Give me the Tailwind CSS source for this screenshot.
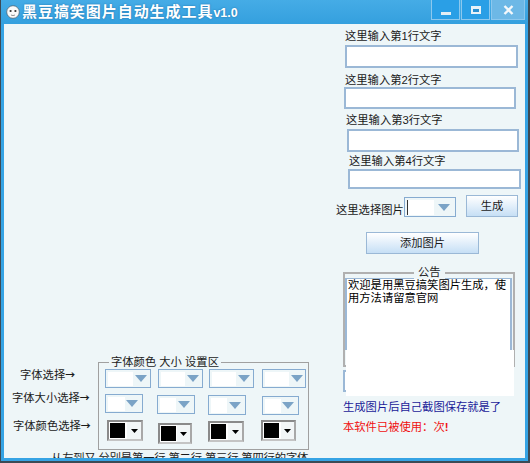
<!doctype html>
<html lang="zh"><head><meta charset="utf-8">
<script src="https://cdn.jsdelivr.net/npm/@tailwindcss/browser@4"></script>
</head>
<body class="m-0 h-[463px] w-[530px] overflow-hidden border-b-2 border-l border-r-2 border-[#3c4a55] bg-[#35a3e4] font-['Liberation_Sans','Noto_Sans_CJK_SC',sans-serif] text-[11.3px] leading-[14px] text-[#1a1a1a]">
<div class="relative flex h-[24px] w-full bg-gradient-to-b from-[#45ace6] to-[#34a0de]">
  <svg class="ml-[5px] mt-[5px] h-[14px] w-[14px]" viewBox="0 0 14 14"><circle cx="7" cy="7" r="6.3" fill="#fafafa" stroke="#4a5a66" stroke-width="0.7"/><circle cx="4.6" cy="6" r="1.1" fill="#333"/><circle cx="9.4" cy="6" r="1.1" fill="#333"/><path d="M5 10 Q7 11.2 9 10" fill="none" stroke="#777" stroke-width="0.8"/></svg>
  <div class="ml-[2px] mt-[3px] h-[18px] whitespace-nowrap text-[15px] font-bold leading-[18px] tracking-[0.95px] text-white [text-shadow:0_0_2px_#1c6fa8]">黑豆搞笑图片自动生成工具<span class="text-[12.5px] tracking-normal">v1.0</span></div>
  <div class="ml-auto mr-[3px] flex h-[20px] gap-[1px]">
    <div class="flex w-[29px] items-end justify-center border-x border-b border-[#8cc8ee] bg-[#2a9fe6] pb-[4px]"><div class="h-[3px] w-[10px] bg-[#e4eef4]"></div></div>
    <div class="flex w-[29px] items-center justify-center border-x border-b border-[#8cc8ee] bg-[#2a9fe6]"><div class="h-[8px] w-[10px] border-2 border-t-[3px] border-[#e8f2f8] bg-[#2a8fd0]"></div></div>
    <div class="flex w-[34px] items-center justify-center border-x border-b border-[#8cc8ee] bg-[#6db8e6]"><svg class="h-[10px] w-[11px]" viewBox="0 0 11 10"><path d="M1.5 1 L9.5 9 M9.5 1 L1.5 9" stroke="#f4f8fb" stroke-width="2.4"/></svg></div>
  </div>
</div>
<div class="ml-[3px] flex h-[434px] w-[521px] overflow-hidden bg-[#eef6f8]">
  <!-- left column -->
  <div class="w-[332px] shrink-0">
    <div class="mt-[338px] flex">
      <div class="w-[94px] shrink-0">
        <div class="ml-[16px] mt-[6px] whitespace-nowrap">字体选择<span class="font-['Noto_Sans_CJK_SC'] text-[10px] font-bold">→</span></div>
        <div class="ml-[8px] mt-[9px] whitespace-nowrap">字体大小选择<span class="font-['Noto_Sans_CJK_SC'] text-[10px] font-bold">→</span></div>
        <div class="ml-[9px] mt-[14px] whitespace-nowrap">字体颜色选择<span class="font-['Noto_Sans_CJK_SC'] text-[10px] font-bold">→</span></div>
      </div>
      <div class="relative h-[88px] w-[211px] shrink-0 border border-[#a0a0a0] pt-[6px]">
        <div class="absolute left-[10px] top-[-8px] whitespace-nowrap bg-[#eef6f8] px-[2px]">字体颜色 大小 设置区</div>
        <div class="flex items-start">
          <div class="ml-[6px] flex h-[19px] w-[46px] items-center border border-[#86abd0] pl-[2px]"><div class="h-[14px] w-[25px] bg-white"></div><svg class="ml-[2px] h-[7px] w-[12px]" viewBox="0 0 12 7"><path d="M0 0H12L6 7Z" fill="#7ba3c6"/></svg></div>
          <div class="ml-[7px] flex h-[19px] w-[45px] items-center border border-[#86abd0] pl-[2px]"><div class="h-[14px] w-[24px] bg-white"></div><svg class="ml-[2px] h-[7px] w-[12px]" viewBox="0 0 12 7"><path d="M0 0H12L6 7Z" fill="#7ba3c6"/></svg></div>
          <div class="ml-[6px] flex h-[19px] w-[45px] items-center border border-[#86abd0] pl-[2px]"><div class="h-[14px] w-[24px] bg-white"></div><svg class="ml-[2px] h-[7px] w-[12px]" viewBox="0 0 12 7"><path d="M0 0H12L6 7Z" fill="#7ba3c6"/></svg></div>
          <div class="ml-[8px] flex h-[19px] w-[44px] items-center border border-[#86abd0] pl-[2px]"><div class="h-[14px] w-[24px] bg-white"></div><svg class="ml-[2px] h-[7px] w-[12px]" viewBox="0 0 12 7"><path d="M0 0H12L6 7Z" fill="#7ba3c6"/></svg></div>
        </div>
        <div class="mt-[6px] flex h-[21px] items-start">
          <div class="ml-[6px] flex h-[19px] w-[38px] items-center border border-[#86abd0] pl-[2px]"><div class="h-[14px] w-[17px] bg-white"></div><svg class="ml-[1px] h-[7px] w-[12px]" viewBox="0 0 12 7"><path d="M0 0H12L6 7Z" fill="#7ba3c6"/></svg></div>
          <div class="ml-[14px] mt-[1px] flex h-[19px] w-[38px] items-center border border-[#86abd0] pl-[2px]"><div class="h-[14px] w-[16px] bg-white"></div><svg class="ml-[2px] h-[7px] w-[12px]" viewBox="0 0 12 7"><path d="M0 0H12L6 7Z" fill="#7ba3c6"/></svg></div>
          <div class="ml-[13px] mt-[1px] flex h-[20px] w-[38px] items-center border border-[#86abd0] pl-[2px]"><div class="h-[15px] w-[16px] bg-white"></div><svg class="ml-[2px] h-[7px] w-[12px]" viewBox="0 0 12 7"><path d="M0 0H12L6 7Z" fill="#7ba3c6"/></svg></div>
          <div class="ml-[16px] mt-[2px] flex h-[19px] w-[37px] items-center border border-[#86abd0] pl-[2px]"><div class="h-[14px] w-[16px] bg-white"></div><svg class="ml-[1px] h-[7px] w-[12px]" viewBox="0 0 12 7"><path d="M0 0H12L6 7Z" fill="#7ba3c6"/></svg></div>
        </div>
        <div class="mt-[5px] flex items-start">
          <div class="ml-[8px] flex h-[21px] w-[36px] items-stretch border-2 border-[#8a8a8a] border-b-[#c4c4c4] border-r-[#a8a8a8] bg-white"><div class="my-[1px] ml-[1px] w-[15px] bg-black"></div><div class="ml-[2px] flex flex-1 items-center justify-center bg-[#f2f6f7]"><svg class="h-[4px] w-[7px]" viewBox="0 0 7 4"><path d="M0 0H7L3.5 4Z" fill="#000"/></svg></div></div>
          <div class="ml-[15px] mt-[3px] flex h-[21px] w-[34px] items-stretch border-2 border-[#8a8a8a] border-b-[#c4c4c4] border-r-[#a8a8a8] bg-white"><div class="my-[1px] ml-[1px] w-[15px] bg-black"></div><div class="ml-[1px] flex flex-1 items-center justify-center bg-[#f2f6f7]"><svg class="h-[4px] w-[7px]" viewBox="0 0 7 4"><path d="M0 0H7L3.5 4Z" fill="#000"/></svg></div></div>
          <div class="ml-[16px] mt-[1px] flex h-[21px] w-[36px] items-stretch border-2 border-[#8a8a8a] border-b-[#c4c4c4] border-r-[#a8a8a8] bg-white"><div class="my-[1px] ml-[1px] w-[15px] bg-black"></div><div class="ml-[2px] flex flex-1 items-center justify-center bg-[#f2f6f7]"><svg class="h-[4px] w-[7px]" viewBox="0 0 7 4"><path d="M0 0H7L3.5 4Z" fill="#000"/></svg></div></div>
          <div class="ml-[17px] flex h-[21px] w-[35px] items-stretch border-2 border-[#8a8a8a] border-b-[#c4c4c4] border-r-[#a8a8a8] bg-white"><div class="my-[1px] ml-[1px] w-[15px] bg-black"></div><div class="ml-[2px] flex flex-1 items-center justify-center bg-[#f2f6f7]"><svg class="h-[4px] w-[7px]" viewBox="0 0 7 4"><path d="M0 0H7L3.5 4Z" fill="#000"/></svg></div></div>
        </div>
      </div>
    </div>
    <div class="ml-[47px] mt-[1px] whitespace-nowrap tracking-[-0.15px]">从左到又 分别是第一行 第二行 第三行 第四行的字体</div>
  </div>
  <!-- right column -->
  <div class="relative flex flex-1 flex-col items-start">
    <div class="ml-[9px] mt-[5px] whitespace-nowrap">这里输入第1行文字</div>
    <div class="ml-[9px] mt-[2px] h-[23px] w-[173px] border-2 border-[#9bb8d6] bg-white"></div>
    <div class="ml-[9px] mt-[5px] whitespace-nowrap">这里输入第2行文字</div>
    <div class="ml-[8px] h-[22px] w-[172px] border-2 border-[#9bb8d6] bg-white"></div>
    <div class="ml-[10px] mt-[4px] whitespace-nowrap">这里输入第3行文字</div>
    <div class="ml-[11px] mt-[2px] h-[23px] w-[172px] border-2 border-[#9bb8d6] bg-white"></div>
    <div class="ml-[13px] mt-[2px] whitespace-nowrap">这里输入第4行文字</div>
    <div class="ml-[12px] mt-[1px] h-[20px] w-[173px] border-2 border-[#9bb8d6] bg-white"></div>
    <div class="mt-[6px] flex h-[22px] items-start">
      <div class="mt-[8px] w-[68px] whitespace-nowrap">这里选择图片</div>
      <div class="mt-[2px] flex h-[20px] w-[52px] items-center border border-[#86abd0] pl-[2px]"><div class="h-[15px] w-[27px] border-l border-[#333] bg-white"></div><svg class="ml-[4px] h-[7px] w-[12px]" viewBox="0 0 12 7"><path d="M0 0H12L6 7Z" fill="#7ba3c6"/></svg></div>
      <button class="ml-[10px] h-[22px] w-[52px] border border-[#9ab8d6] bg-gradient-to-b from-white to-[#c6dff5]">生成</button>
    </div>
    <button class="ml-[30px] mt-[15px] h-[22px] w-[113px] border border-[#9ab8d6] bg-gradient-to-b from-white to-[#c6dff5]">添加图片</button>
    <div class="relative ml-[7px] mt-[18px] h-[95px] w-[172px] border-2 border-[#b0b0b0]">
      <div class="absolute left-[69px] top-[-9px] bg-[#eef6f8] px-[4px]">公告</div>
      <div class="ml-[0px] mt-[4px] h-[72px] w-[167px] border-x-2 border-t border-[#9bb8d6] bg-white px-[1px] leading-[13px] text-black">欢迎是用黑豆搞笑图片生成，使用方法请留意官网</div>
    </div>
    <div class="ml-[7px] mt-[3px] h-[22px] w-[100px] border-2 border-[#9bb8d6] bg-white"></div>
    <div class="absolute left-[10px] top-[326px] h-[46px] w-[168px] bg-white"></div>
    <div class="ml-[7px] mt-[8px] whitespace-nowrap text-[#1a1a99]">生成图片后自己截图保存就是了</div>
    <div class="ml-[7px] mt-[6px] whitespace-nowrap text-[#f01010]">本软件已被使用：次<span class="font-bold">!</span></div>
  </div>
</div>
</body></html>
